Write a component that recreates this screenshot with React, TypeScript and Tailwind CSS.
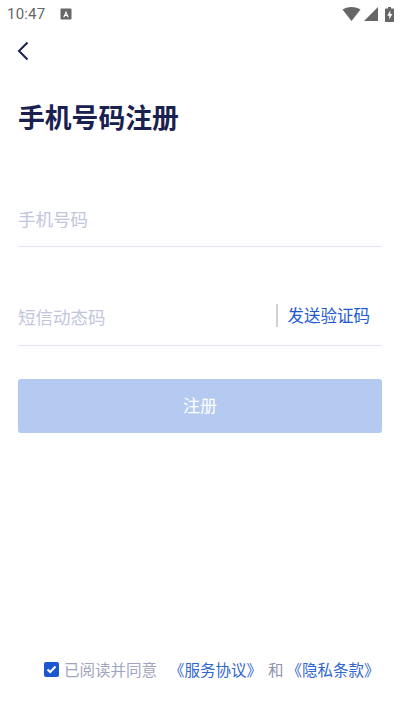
const font = "font-['Noto_Sans_CJK_SC','Noto_Sans',sans-serif]";

const StatusBar = () => (
  <div className="flex h-7 items-center pl-[7px] pr-[6px]">
    <span className="font-['Roboto',sans-serif] text-[15px] tracking-[0.2px] text-[#666666]">10:47</span>
    <svg className="ml-[15px]" width="12" height="12" viewBox="0 0 12 12">
      <rect x="0.5" y="0.5" width="11" height="11" rx="1" fill="#666666" />
      <path d="M3.2 9.2 6 2.8l2.8 6.4H7.5L7 8H5l-.5 1.2zM5.4 6.8h1.2L6 5.3z" fill="#ffffff" />
    </svg>
    <div className="ml-auto flex items-center gap-[2px]">
      <svg width="19" height="14" viewBox="0 0 19 14">
        <path d="M0.5 2.6C3 0.9 6 0 9.5 0s6.500 0.9 9 2.600L9.500 14z" fill="#666666" />
      </svg>
      <svg className="ml-[1px]" width="14" height="14" viewBox="0 0 14 14">
        <path d="M14 0v14H0z" fill="#666666" />
      </svg>
      <svg className="ml-[5px]" width="9" height="15" viewBox="0 0 9 15">
        <path d="M3 0h3v1.500h2.200c.5 0 .8.300.8.800V14.200c0 .5-.3.800-.8.800H.8C.3 15 0 14.700 0 14.200V2.300c0-.5.300-.8.800-.8H3z" fill="#666666" />
        <path d="M5.300 3.500 2.300 8.700h2v3.800l3-5.400h-2z" fill="#ffffff" />
      </svg>
    </div>
  </div>
);

export default function App() {
  return (
    <div className={`flex h-[711px] w-[400px] flex-col overflow-hidden bg-white ${font}`}>
      <StatusBar />
      <button className="ml-[17px] mt-[13px] h-5 w-[12px]">
        <svg width="12" height="20" viewBox="0 0 12 20" fill="none">
          <path d="M10.500 1.500 2 10l8.500 8.500" stroke="#1a2050" strokeWidth="2" />
        </svg>
      </button>

      <h1 className="ml-[18px] mt-[36px] text-[26.800px] leading-[40px] font-semibold text-[#1a2050]">手机号码注册</h1>

      <div className="mx-[18px] mt-[57px] flex h-[53px] items-center border-b border-[#e4e6f2]">
        <span className="mb-[2px] text-[17.500px] text-[#c1c5de]">手机号码</span>
      </div>

      <div className="mx-[18px] mt-[42px] flex h-[57px] items-center border-b border-[#e4e6f2]">
        <span className="text-[17.500px] text-[#c1c5de]">短信动态码</span>
        <div className="ml-auto mb-[3px] flex items-center">
          <div className="h-[23px] w-[2px] bg-[#d2d2d2]" />
          <span className="ml-[10px] mr-[12px] text-[16.500px] text-[#1d5ad0]">发送验证码</span>
        </div>
      </div>

      <div className="mx-[18px] mt-[33px] flex h-[54px] items-center justify-center rounded-[3px] bg-[#b5caf1] pb-[2px] text-[17px] text-white">
        注册
      </div>

      <div className="mt-[225px] flex items-center pl-[44px] text-[15.500px] whitespace-nowrap">
        <div className="flex h-[15px] w-[15px] items-center justify-center rounded-[2px] bg-[#1d57d0]">
          <svg width="11" height="9" viewBox="0 0 11 9" fill="none">
            <path d="M1.500 4.500 4.200 7 9.500 1.500" stroke="#ffffff" strokeWidth="2" />
          </svg>
        </div>
        <span className="ml-[5px] text-[#a0a4c0]">已阅读并同意</span>
        <span className="ml-[12px] text-[#2f66cf]">《服务协议》</span>
        <span className="ml-[6px] text-[#8f93b3]">和</span>
        <span className="ml-[3px] text-[#2f66cf]">《隐私条款》</span>
      </div>
    </div>
  );
}
